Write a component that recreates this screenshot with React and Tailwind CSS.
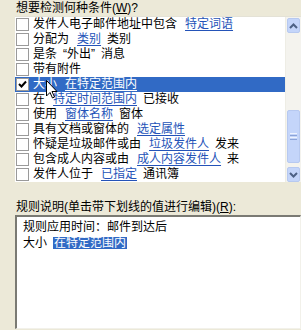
import React from "react";

const FONT = { fontFamily: '"Liberation Sans", "Noto Sans CJK SC", sans-serif' };

const rows = [
  { parts: ["发件人电子邮件地址中包含", { link: "特定词语" }] },
  { parts: ["分配为", { link: "类别" }, "类别"] },
  { parts: ["是条", "“外出”", "消息"] },
  { parts: ["带有附件"] },
  { parts: ["大小", { link: "在特定范围内" }], checked: true, selected: true },
  { parts: ["在", { link: "特定时间范围内" }, "已接收"] },
  { parts: ["使用", { link: "窗体名称" }, "窗体"] },
  { parts: ["具有文档或窗体的", { link: "选定属性" }] },
  { parts: ["怀疑是垃圾邮件或由", { link: "垃圾发件人" }, "发来"] },
  { parts: ["包含成人内容或由", { link: "成人内容发件人" }, "来"] },
  { parts: ["发件人位于", { link: "已指定" }, "通讯簿"] },
];

function Checkbox({ checked }) {
  return (
    <span className="w-[13px] h-[13px] border border-[#9a9a9a] bg-white flex items-center justify-center shrink-0">
      {checked && (
        <svg width="9" height="9" viewBox="0 0 9 9">
          <path d="M1 4 L3.5 6.5 L8 1.5" fill="none" stroke="#000" strokeWidth="2" />
        </svg>
      )}
    </span>
  );
}

function Row({ row }) {
  return (
    <div
      className={
        "h-[15px] flex items-center gap-[4px] pl-[1px] whitespace-nowrap " +
        (row.selected ? "bg-[#316ac5] text-white" : "text-black")
      }
    >
      <Checkbox checked={row.checked} />
      <span className="leading-[15px] flex">
        {row.parts.map((p, i) =>
          typeof p === "string" ? (
            <span key={i} className={i > 0 ? "ml-[6px]" : ""}>
              {p}
            </span>
          ) : (
            <span
              key={i}
              className={
                "ml-[8px] underline underline-offset-2 " +
                (row.selected ? "text-white" : "text-[#2453b8]")
              }
            >
              {p.link}
            </span>
          )
        )}
      </span>
    </div>
  );
}

function ScrollButton({ down }) {
  return (
    <div className="h-[15px] mx-[1px] rounded-[2px] border border-[#b7c9f0] bg-[#c4d5fa] flex items-center justify-center">
      <svg width="9" height="6" viewBox="0 0 9 6">
        <path
          d={down ? "M1 1 L4.5 4.5 L8 1" : "M1 5 L4.5 1.5 L8 5"}
          fill="none"
          stroke="#4d6185"
          strokeWidth="2"
        />
      </svg>
    </div>
  );
}

function Scrollbar() {
  return (
    <div className="w-[16px] bg-[#f4f3ee] border-l border-[#eeede5] flex flex-col pt-[1px]">
      <ScrollButton />
      <div className="flex-1 flex flex-col pt-[77px] pb-[3px]">
        <div className="h-[53px] mx-[1px] rounded-[2px] border border-[#b7c9f0] bg-[#c4d5fa] flex flex-col items-center justify-center gap-[1px]">
          <span className="w-[7px] h-[1px] bg-[#eef3fe]" />
          <span className="w-[7px] h-[1px] bg-[#8ca4d8]" />
          <span className="w-[7px] h-[1px] bg-[#eef3fe]" />
          <span className="w-[7px] h-[1px] bg-[#8ca4d8]" />
        </div>
      </div>
      <ScrollButton down />
    </div>
  );
}

function Cursor() {
  return (
    <svg
      className="absolute left-[46px] top-[80px]"
      width="12"
      height="19"
      viewBox="0 0 12 19"
    >
      <path
        d="M0.5 0.5 L0.5 16 L4 12.5 L6.5 18 L8.5 17 L6 11.5 L11 11.5 Z"
        fill="#fff"
        stroke="#000"
        strokeWidth="1"
      />
    </svg>
  );
}

export default function App() {
  return (
    <div
      className="relative w-[301px] h-[330px] bg-[#ece9d8] overflow-hidden text-[12px] text-black flex flex-col pl-[15px]"
      style={FONT}
    >
      <div className="h-[16px] leading-[16px] pl-[1px]">
        想要检测何种条件(<span className="underline">W</span>)?
      </div>

      <div className="h-[166px] flex bg-white border-t border-[#e4e2d6]">
        <div className="flex-1 flex flex-col">
          {rows.map((r, i) => (
            <Row key={i} row={r} />
          ))}
        </div>
        <Scrollbar />
      </div>

      <div className="h-[16px] mt-[17px] leading-[16px] pl-[1px]">
        规则说明(单击带下划线的值进行编辑)(<span className="underline">R</span>):
      </div>

      <div className="h-[114px] bg-white border-t-2 border-l-2 border-t-[#7a7a73] border-l-[#7a7a73] border-r border-b border-r-[#f2f1ea] border-b-[#f2f1ea] pl-[6px] pt-[2px]">
        <div className="h-[16px] leading-[16px]">规则应用时间：邮件到达后</div>
        <div className="h-[16px] leading-[16px] flex items-center">
          <span>大小</span>
          <span className="ml-[6px] bg-[#316ac5] text-white underline underline-offset-2 leading-[12px] px-[1px]">
            在特定范围内
          </span>
        </div>
      </div>

      <Cursor />
    </div>
  );
}
